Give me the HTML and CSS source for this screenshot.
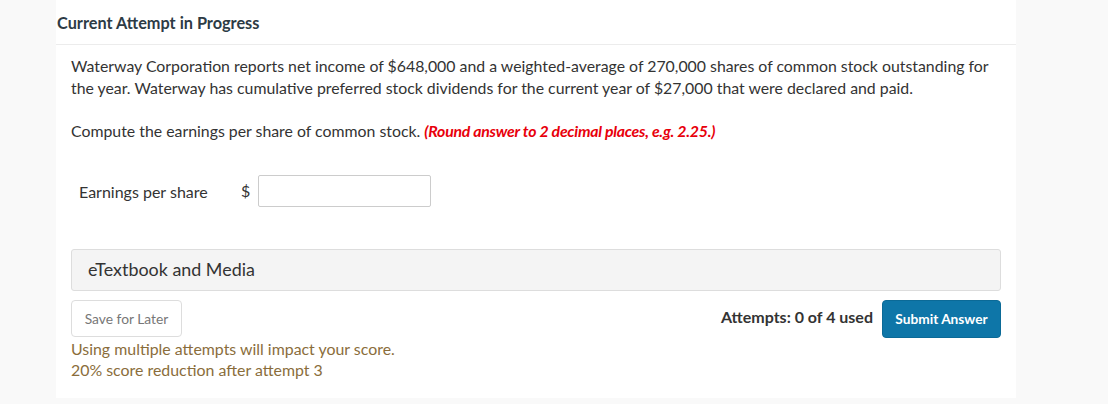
FILE: index.html
```html
<!DOCTYPE html>
<html lang="en">
<head>
<meta charset="utf-8">
<title>Current Attempt in Progress</title>
<link rel="stylesheet" href="styles.css">
</head>
<body>
<div class="card">
  <div class="card-header">Current Attempt in Progress</div>
  <div class="card-body">
    <p class="question">Waterway Corporation reports net income of $648,000 and a weighted-average of 270,000 shares of common stock outstanding for the year. Waterway has cumulative preferred stock dividends for the current year of $27,000 that were declared and paid.</p>
    <p class="question">Compute the earnings per share of common stock. <span class="hint">(Round answer to 2 decimal places, e.g. 2.25.)</span></p>
    <div class="answer-row">
      <span class="answer-label">Earnings per share</span>
      <span class="currency">$</span>
      <input class="answer-input" type="text" aria-label="Earnings per share">
    </div>
    <div class="media-box">eTextbook and Media</div>
    <div class="actions">
      <button class="btn-save" type="button">Save for Later</button>
      <div class="actions-right">
        <span class="attempts">Attempts: 0 of 4 used</span>
        <button class="btn-submit" type="button">Submit Answer</button>
      </div>
    </div>
    <div class="warning">
      <div>Using multiple attempts will impact your score.</div>
      <div>20% score reduction after attempt 3</div>
    </div>
  </div>
</div>
</body>
</html>
```

FILE: styles.css
```css
html, body {
  margin: 0;
  padding: 0;
}
body {
  background: #f9f9f9;
  font-family: Lato, "Liberation Sans", sans-serif;
  color: #333;
  width: 1108px;
  height: 404px;
  overflow: hidden;
}
.card {
  margin-left: 56px;
  width: 960px;
  height: 398px;
  background: #fff;
  box-sizing: border-box;
}
.card-header {
  height: 45px;
  box-sizing: border-box;
  padding: 13px 0 0 1px;
  font-size: 16.3px;
  line-height: 20px;
  font-weight: 700;
  color: #2d3b45;
  border-bottom: 1px solid #ececec;
}
.card-body {
  padding: 10px 15px 0 15px;
}
.question {
  margin: 0 0 21px 0;
  font-size: 15.85px;
  line-height: 22px;
  color: #333;
}
.hint {
  color: #e8000b;
  font-weight: 700;
  font-style: italic;
  letter-spacing: -0.25px;
}
.answer-row {
  display: flex;
  align-items: center;
  margin-top: 33px;
  padding-left: 8px;
  height: 32px;
}
.answer-label {
  font-size: 16px;
  width: 162px;
}
.currency {
  font-size: 16px;
  width: 17px;
  position: relative;
  top: -1px;
}
.answer-input {
  width: 173px;
  height: 32px;
  box-sizing: border-box;
  border: 1px solid #ccc;
  border-radius: 2px;
  margin: 0;
  padding: 0 6px;
  font-family: inherit;
  font-size: 15px;
}
.media-box {
  margin-top: 42px;
  height: 42px;
  box-sizing: border-box;
  background: #f4f4f4;
  border: 1px solid #ddd;
  border-radius: 3px;
  padding: 0 16px;
  font-size: 17.9px;
  line-height: 38px;
  color: #333;
}
.actions {
  display: flex;
  justify-content: space-between;
  align-items: flex-start;
  margin-top: 9px;
}
.btn-save {
  width: 111px;
  height: 37px;
  box-sizing: border-box;
  background: #fff;
  border: 1px solid #ddd;
  border-radius: 4px;
  font-family: inherit;
  font-size: 13.8px;
  color: #777;
  padding: 0 0 1px 0;
  margin: 0;
}
.actions-right {
  display: flex;
  align-items: center;
  gap: 9px;
}
.attempts {
  font-size: 16px;
  font-weight: 700;
  color: #333;
  position: relative;
  top: -3px;
}
.btn-submit {
  width: 119px;
  height: 38px;
  box-sizing: border-box;
  background: #0e76a8;
  border: 1px solid #0b6a97;
  border-radius: 4px;
  color: #fff;
  font-family: inherit;
  font-size: 13.7px;
  font-weight: 700;
  padding: 0 0 1px 0;
  margin: 0;
}
.warning {
  font-size: 15.9px;
  line-height: 21px;
  color: #8a6d3b;
  margin-top: 0;
}
```
